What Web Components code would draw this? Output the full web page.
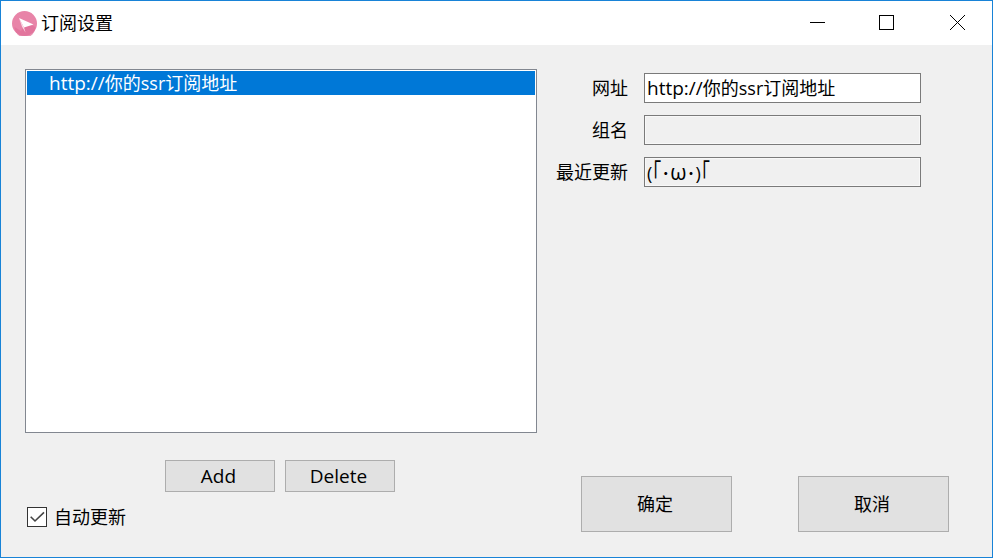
<!DOCTYPE html>
<html lang="zh-CN">
<head>
<meta charset="utf-8">
<title>订阅设置</title>
<style>
  html, body { margin: 0; height: 100%; }
  body { font: 18px/24px "Open Sans", "Noto Sans CJK SC", sans-serif; color: #000; }
  /* the latin runs come out a bit wider in the original */
  .lat { font-size: 19px; }
  .omega { font-size: 21px; }
  .tall { display: inline-block; transform: scaleY(1.5); transform-origin: 50% 45%; }
</style>
</head>
<body>
<sub-window caption="订阅设置">
  <div slot="left">
    <sub-list>
      <sub-item selected><span class="lat">http://</span>你的ssr订阅地址</sub-item>
    </sub-list>
  </div>
  <div slot="list-actions">
    <push-button style="width:110px;height:32px"><span class="lat">Add</span></push-button>
    <push-button style="width:110px;height:32px"><span class="lat">Delete</span></push-button>
  </div>
  <check-box slot="auto" checked>自动更新</check-box>

  <field-row slot="fields" label="网址" editable><span class="lat">http://</span>你的ssr订阅地址</field-row>
  <field-row slot="fields" label="组名"></field-row>
  <field-row slot="fields" label="最近更新">(<span class="tall">｢</span>･<span class="omega">ω</span>･)<span class="tall">｢</span></field-row>

  <push-button slot="confirm" style="width:151px;height:56px">确定</push-button>
  <push-button slot="confirm" style="width:151px;height:56px">取消</push-button>
</sub-window>

<script>
class SubWindow extends HTMLElement {
  constructor() {
    super()
    const shadow = this.attachShadow({ mode: 'open' })
    shadow.innerHTML = `
      <style>
        :host {
          display: flex;
          flex-direction: column;
          box-sizing: border-box;
          height: 558px;
          border: 1px solid #1883d7;
          background: #f0f0f0;
        }
        .title {
          display: flex;
          align-items: center;
          height: 44px;
          background: #fff;
          padding-left: 11px;
        }
        .logo { width: 25px; height: 25px; margin-right: 4px; }
        .caption { flex: 1; }
        .ctl { width: 70px; height: 44px; display: block; }
        .main { flex: 1; display: flex; min-height: 0; padding: 24px 0 25px 24px; }
        .left { width: 512px; display: flex; flex-direction: column; }
        .actions { margin: 27px 0 0 140px; }
        .auto { margin: 15px 0 0 2px; }
        .right { flex: 1; display: flex; flex-direction: column; }
        .fields { display: flex; flex-direction: column; gap: 12px; margin-top: 4px; }
        .confirm { margin: auto 0 0 44px; display: flex; gap: 66px; }
        ::slotted([slot="list-actions"]) { display: flex; gap: 10px; }
      </style>
      <div class="title">
        <svg class="logo" viewBox="0 0 25 25">
          <circle cx="12.5" cy="12.5" r="12.5" fill="#e884a8"/>
          <path d="M2.5 16 A10.5 10.5 0 0 0 23.5 16 L17 13 L11 17 L9 20 Z" fill="#e0709a" opacity=".75"/>
          <path d="M7 7 L21.5 13.5 L12 16.5 Z" fill="#fff"/>
          <path d="M7 7 L12 16.5 L13.5 21.5 L10 15.5 Z" fill="#fbe3ec"/>
        </svg>
        <span class="caption"></span>
        <svg class="ctl" viewBox="0 0 70 44"><path d="M28 21.5H43" stroke="#000" fill="none"/></svg>
        <svg class="ctl" viewBox="0 0 70 44"><rect x="27.5" y="14.5" width="14" height="14" stroke="#000" fill="none"/></svg>
        <svg class="ctl" viewBox="0 0 70 44"><path d="M28 14L43 29M43 14L28 29" stroke="#000" fill="none"/></svg>
      </div>
      <div class="main">
        <div class="left">
          <slot name="left"></slot>
          <div class="actions"><slot name="list-actions"></slot></div>
          <div class="auto"><slot name="auto"></slot></div>
        </div>
        <div class="right">
          <div class="fields"><slot name="fields"></slot></div>
          <div class="confirm"><slot name="confirm"></slot></div>
        </div>
      </div>`
    shadow.querySelector('.caption').textContent = this.getAttribute('caption')
  }
}

class SubList extends HTMLElement {
  constructor() {
    super()
    this.attachShadow({ mode: 'open' }).innerHTML = `
      <style>
        :host {
          display: block;
          box-sizing: border-box;
          height: 364px;
          padding: 1px;
          border: 1px solid #828790;
          background: #fff;
        }
      </style>
      <slot></slot>`
  }
}

class SubItem extends HTMLElement {
  constructor() {
    super()
    this.attachShadow({ mode: 'open' }).innerHTML = `
      <style>
        :host {
          display: block;
          height: 24px;
          padding-left: 22px;
          line-height: 24px;
          white-space: nowrap;
        }
        :host([selected]) { background: #0078d7; color: #fff; }
      </style>
      <slot></slot>`
  }
}

class FieldRow extends HTMLElement {
  constructor() {
    super()
    const shadow = this.attachShadow({ mode: 'open' })
    shadow.innerHTML = `
      <style>
        :host { display: flex; align-items: center; gap: 16px; height: 30px; }
        .label { width: 91px; text-align: right; white-space: nowrap; }
        .box {
          box-sizing: border-box;
          width: 277px;
          height: 30px;
          padding-left: 2px;
          border: 1px solid #7a7a7a;
          line-height: 28px;
          white-space: nowrap;
          background: #f0f0f0;
          box-shadow: inset 0 0 0 1px #f8f8f8;
        }
        :host([editable]) .box { background: #fff; box-shadow: none; }
      </style>
      <span class="label"></span>
      <div class="box"><slot></slot></div>`
    shadow.querySelector('.label').textContent = this.getAttribute('label')
  }
}

class PushButton extends HTMLElement {
  constructor() {
    super()
    this.attachShadow({ mode: 'open' }).innerHTML = `
      <style>
        :host {
          display: flex;
          align-items: center;
          justify-content: center;
          box-sizing: border-box;
          padding-right: 3px;
          border: 1px solid #adadad;
          background: #e1e1e1;
        }
      </style>
      <slot></slot>`
  }
}

class CheckBox extends HTMLElement {
  constructor() {
    super()
    this.attachShadow({ mode: 'open' }).innerHTML = `
      <style>
        :host { display: flex; align-items: center; gap: 7px; height: 20px; }
        .mark { width: 20px; height: 20px; display: block; }
      </style>
      <svg class="mark" viewBox="0 0 20 20">
        <rect x="0.5" y="0.5" width="19" height="19" fill="#fff" stroke="#333"/>
        <path d="M3.7 9.7L8 14L17 5.3" fill="none" stroke="#444" stroke-width="1.6"/>
      </svg>
      <slot></slot>`
  }
}

customElements.define('sub-window', SubWindow)
customElements.define('sub-list', SubList)
customElements.define('sub-item', SubItem)
customElements.define('field-row', FieldRow)
customElements.define('push-button', PushButton)
customElements.define('check-box', CheckBox)
</script>
</body>
</html>
